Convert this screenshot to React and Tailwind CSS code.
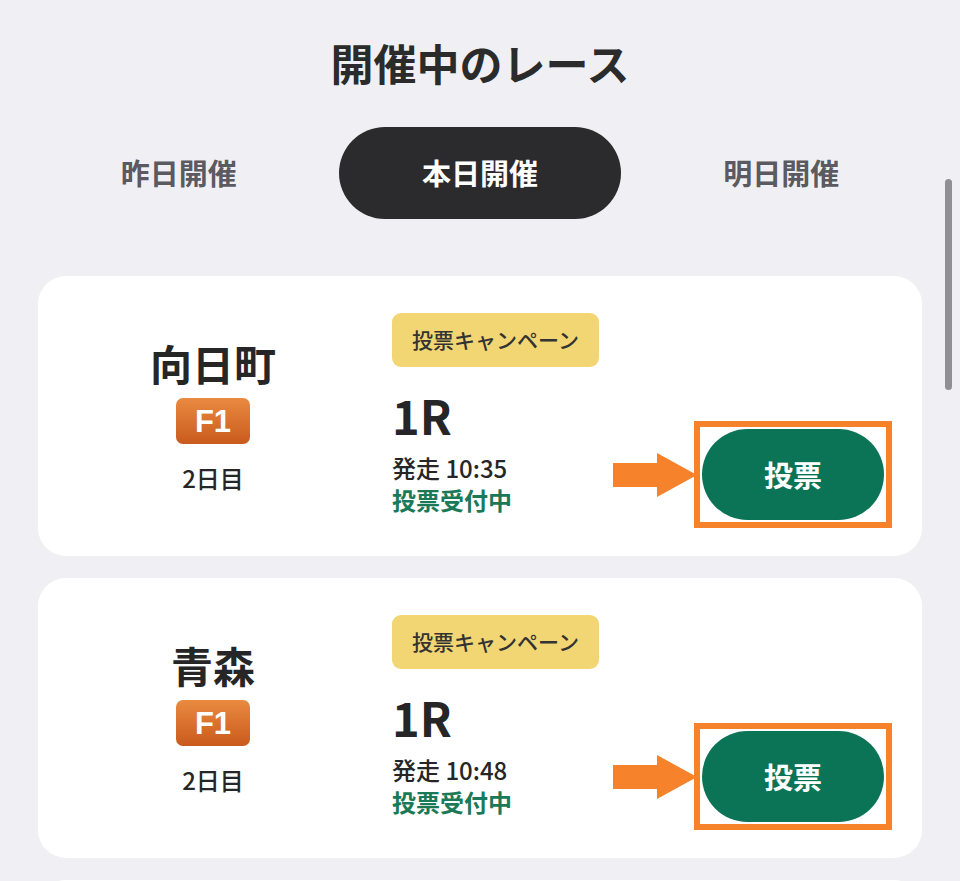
import React from 'react';

const races = [
  { venue: '向日町', grade: 'F1', day: '2日目', race: '1R', time: '10:35' },
  { venue: '青森', grade: 'F1', day: '2日目', race: '1R', time: '10:48' },
];

const tabs = ['昨日開催', '本日開催', '明日開催'];

function Arrow() {
  // orange annotation arrow pointing at the vote button
  return (
    <svg width="84" height="44" viewBox="0 0 84 44" className="shrink-0">
      <path d="M0 10 H44 V0 L84 22 L44 44 V34 H0 Z" fill="#f6822b" />
    </svg>
  );
}

function RaceCard({ venue, grade, day, race, time }) {
  return (
    <div className="flex h-[280px] shrink-0 rounded-[28px] bg-white pr-[30px]">
      {/* venue column */}
      <div className="flex w-[350px] flex-col items-center justify-center">
        <div className="text-[42px] font-semibold leading-[50px] text-[#262626]">{venue}</div>
        <div className="mt-[10px] flex h-[46px] w-[74px] items-center justify-center rounded-[7px] bg-gradient-to-b from-[#ea8a40] to-[#c95a1c] font-['Liberation_Sans',sans-serif] text-[31px] font-black leading-none text-white">
          {grade}
        </div>
        <div className="mt-[18px] text-[24px] font-medium leading-[32px] text-[#262626]">{day}</div>
      </div>

      {/* race info column */}
      <div className="ml-[4px] flex flex-1 flex-col items-start pt-[37px]">
        <div className="flex h-[54px] items-center rounded-[9px] bg-[#f1d673] px-[20px] text-[21px] font-medium text-[#333]">
          投票キャンペーン
        </div>
        <div className="mt-[23px] text-[47px] font-semibold leading-[50px] text-[#262626]">{race}</div>
        <div className="mt-[12px] text-[24px] font-medium leading-[32px] text-[#262626]">発走 {time}</div>
        <div className="text-[24px] font-semibold leading-[32px] text-[#1a7a58]">投票受付中</div>
      </div>

      {/* vote button with annotation */}
      <div className="flex items-center self-start pt-[145px]">
        <Arrow />
        <div className="-ml-[3px] border-[6px] border-[#f6822b] bg-white p-[2px]">
          <button className="flex h-[91px] w-[182px] items-center justify-center rounded-full bg-[#0b7457] text-[29px] font-semibold text-white">
            投票
          </button>
        </div>
      </div>
    </div>
  );
}

export default function App() {
  return (
    <div className="relative h-[881px] w-[960px] overflow-hidden bg-[#f0f0f4] font-['Noto_Sans_CJK_JP',sans-serif]">
      <h1 className="pt-[32px] text-center text-[43px] font-semibold leading-[60px] text-[#2b2b2b]">
        開催中のレース
      </h1>

      <div className="mt-[35px] grid grid-cols-3 px-[28px]">
        {tabs.map((t) => (
          <div key={t} className="flex justify-center">
            <div
              className={
                t === '本日開催'
                  ? 'flex h-[92px] w-[282px] items-center justify-center rounded-full bg-[#2b2b2e] text-[29px] font-semibold text-white'
                  : 'flex h-[92px] w-[282px] items-center justify-center text-[29px] font-semibold text-[#5a5a60]'
              }
            >
              {t}
            </div>
          </div>
        ))}
      </div>

      <div className="mt-[57px] flex flex-col gap-[22px] px-[38px]">
        {races.map((r) => (
          <RaceCard key={r.venue} {...r} />
        ))}
        {/* next card peeking in below the fold */}
        <div className="h-[280px] shrink-0 rounded-[28px] bg-white" />
      </div>

      {/* scroll indicator */}
      <div className="absolute left-[945px] top-[179px] h-[211px] w-[7px] rounded-full bg-[#8f8f94]" />
    </div>
  );
}
